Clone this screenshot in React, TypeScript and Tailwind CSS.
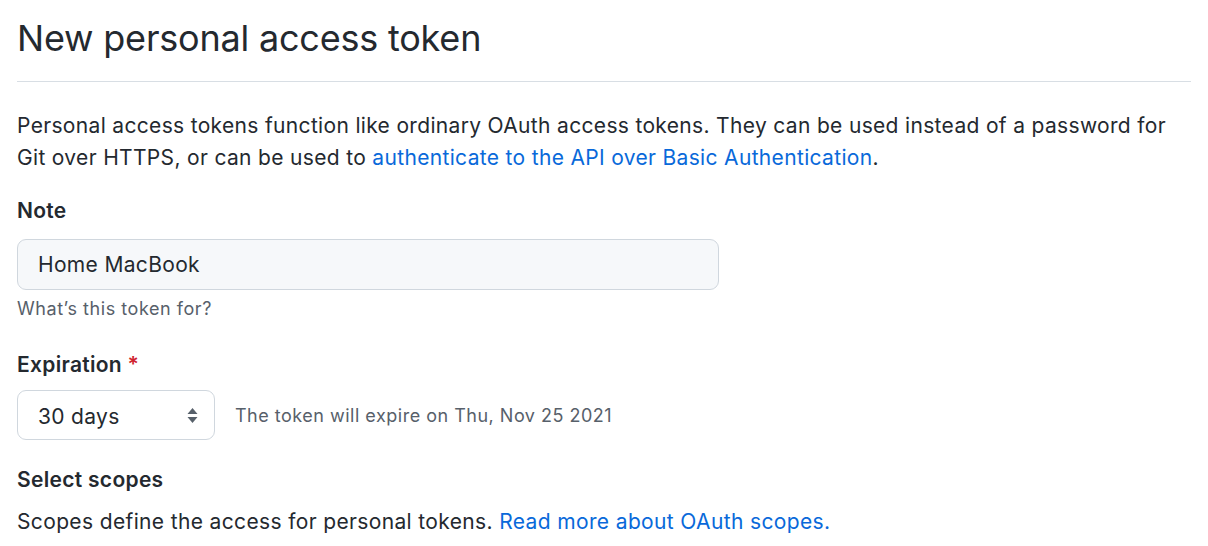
import React from "react";

// Sort-of GitHub "new token" form, scaled 1.5x
const FONT = "font-['Inter','Liberation_Sans',Arial,sans-serif]";

function SelectArrows() {
  return (
    <svg width="11" height="17" viewBox="0 0 11 17" className="shrink-0">
      <path d="M5.5 1 L10.5 7 H0.5 Z" fill="#57606a" />
      <path d="M5.5 16 L10.5 10 H0.5 Z" fill="#57606a" />
    </svg>
  );
}

export default function App() {
  return (
    <div className={`${FONT} min-h-[546px] bg-white px-[17px] text-[#24292f]`}>
      {/* Heading */}
      <div className="border-b border-[#d8dee4] pt-[16px] pb-[20px]">
        <h2 className="text-[36px] leading-[45px] font-normal tracking-[-0.2px]">New personal access token</h2>
      </div>

      <p className="mt-[28px] text-[21px] leading-[31.5px] tracking-[0.33px]">
        Personal access tokens function like ordinary OAuth access tokens. They can be used instead of a password for
        <br />
        Git over HTTPS, or can be used to{" "}
        <a className="text-[#0969da]" href="#">
          authenticate to the API over Basic Authentication
        </a>
        .
      </p>

      {/* Note */}
      <div className="mt-[22px] text-[21px] leading-[31.5px] font-semibold tracking-[0.3px]">Note</div>
      <div className="mt-[12px] flex h-[51px] w-[702px] items-center rounded-[9px] border border-[#d0d7de] bg-[#f6f8fa] px-[20px] pt-[1px] text-[21px] tracking-[0.33px]">
        Home MacBook
      </div>
      <div className="mt-[5px] text-[18px] leading-[27px] tracking-[0.55px] text-[#57606a]">What’s this token for?</div>

      {/* Expiration */}
      <div className="mt-[27px] text-[21px] leading-[31.5px] font-semibold tracking-[0.3px]">
        Expiration <span className="text-[#cf222e]">*</span>
      </div>
      <div className="mt-[10px] flex items-center gap-[20px]">
        <div className="flex h-[50px] w-[198px] items-center justify-between rounded-[9px] border border-[#d0d7de] bg-white pl-[20px] pr-[16px] text-[21px] tracking-[0.33px]">
          <span className="pt-[3px]">30 days</span>
          <SelectArrows />
        </div>
        <span className="text-[18px] tracking-[0.5px] text-[#57606a]">The token will expire on Thu, Nov 25 2021</span>
      </div>

      {/* Scopes */}
      <div className="mt-[24px] text-[21px] leading-[31.5px] font-semibold tracking-[0.3px]">Select scopes</div>
      <p className="mt-[10px] text-[21px] leading-[31.5px] tracking-[0.36px]">
        Scopes define the access for personal tokens.{" "}
        <a className="text-[#0969da]" href="#">
          Read more about OAuth scopes.
        </a>
      </p>
    </div>
  );
}
